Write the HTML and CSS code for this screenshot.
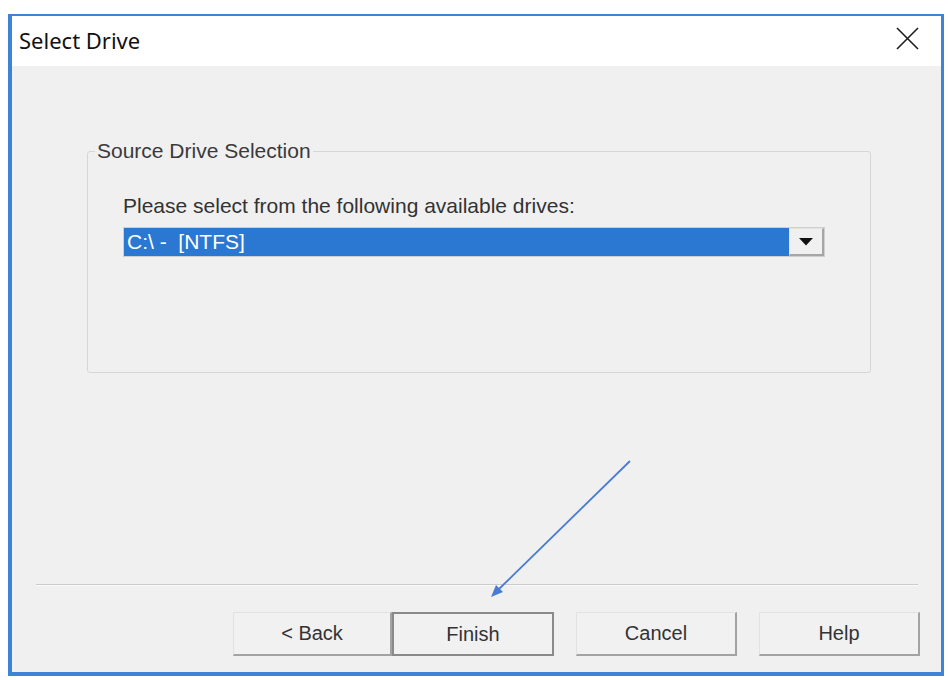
FILE: index.html
```
<!DOCTYPE html>
<html lang="en">
<head>
    <meta charset="UTF-8">
    <title>Select Drive</title>
    <link rel="stylesheet" href="styles.css">
</head>
<body>

<div class="window">
    <div class="titlebar">
        <span class="title">Select Drive</span>
        <svg class="close" width="23" height="23" viewBox="0 0 23 23">
            <path d="M1 1L22 22M22 1L1 22" stroke="#1e1e1e" stroke-width="1.6" fill="none"/>
        </svg>
    </div>

    <div class="panel">
        <fieldset class="group">
            <legend>Source Drive Selection</legend>
            <div class="group-inner">
                <p class="prompt">Please select from the following available drives:</p>
                <div class="combo">
                    <span class="combo-value">C:\ -  [NTFS]</span>
                    <span class="combo-btn">
                        <svg width="14" height="8" viewBox="0 0 14 8"><path d="M0 0H14L7 7.5Z" fill="#111"/></svg>
                    </span>
                </div>
            </div>
        </fieldset>

        <div class="separator"></div>

        <div class="buttons">
            <button class="btn btn-back">&lt; Back</button>
            <button class="btn btn-default">Finish</button>
            <button class="btn">Cancel</button>
            <button class="btn">Help</button>
        </div>
    </div>
</div>

<!-- annotation arrow drawn over the dialog -->
<svg class="annotation" width="950" height="680" viewBox="0 0 950 680">
    <line x1="630" y1="461" x2="497" y2="591" stroke="#4a7bd4" stroke-width="1.8"/>
    <polygon points="491,597 503,592 496,585" fill="#4a7bd4"/>
</svg>

</body>
</html>
```

FILE: styles.css
```
body { margin: 0; background: #fff; font-family: "Liberation Sans", Arial, sans-serif; color: #333; position: relative; width: 950px; height: 680px; overflow: hidden; }

.window { margin: 14px 0 0 8px; width: 929px; height: 656px; border-style: solid; border-color: #3d84d8; border-width: 2px 3px 4px 4px; display: flex; flex-direction: column; }

/* Title bar */
.titlebar { height: 50px; background: #fff; display: flex; align-items: center; justify-content: space-between; padding: 0 22px 0 7px; }
.title { font-family: "Noto Sans", sans-serif; font-size: 22px; color: #111; margin-top: -3px; }
.close { margin-top: -5px; }

/* Dialog body */
.panel { flex: 1; background: #f0f0f0; display: flex; flex-direction: column; padding-bottom: 16px; }

.group { margin: 73px 70px 0 75px; height: 234px; box-sizing: border-box; border: 1px solid #d6d6d6; border-radius: 3px; padding: 0; }
.group legend { font-size: 21px; color: #3a3a3a; margin-left: 7px; padding: 0 2px; }
.group-inner { padding: 0 45px 0 35px; }

.prompt { margin: 31px 0 9px; font-size: 21px; line-height: 24px; color: #333; }

.combo { display: flex; height: 30px; box-sizing: border-box; border: 1px solid #cfcfcf; }
.combo-value { flex: 1; background: #2b78d2; color: #fff; font-size: 21px; line-height: 28px; padding-left: 3px; white-space: pre; }
.combo-btn { width: 35px; box-sizing: border-box; background: #f0f0f0; border-style: solid; border-width: 1px 2px 2px 1px; border-color: #e4e4e4 #a6a6a6 #a6a6a6 #e4e4e4; display: flex; align-items: center; justify-content: center; }

.separator { margin: auto 23px 26px 24px; border-top: 1px solid #cbcbcb; border-bottom: 1px solid #fafafa; }

/* Buttons */
.buttons { display: flex; justify-content: flex-end; gap: 22px; padding-right: 21px; }
.btn { width: 161px; height: 44px; font-family: inherit; font-size: 20px; color: #333; background: #f1f1f1; border-style: solid; border-width: 1px 2px 2px 1px; border-color: #e2e2e2 #a3a3a3 #a3a3a3 #e2e2e2; padding: 0; }
.btn-back { width: 159px; margin-right: -22px; }
.btn-default { width: 162px; border: 2px solid #8a8a8a; }

.annotation { position: absolute; left: 0; top: 0; pointer-events: none; }
```
